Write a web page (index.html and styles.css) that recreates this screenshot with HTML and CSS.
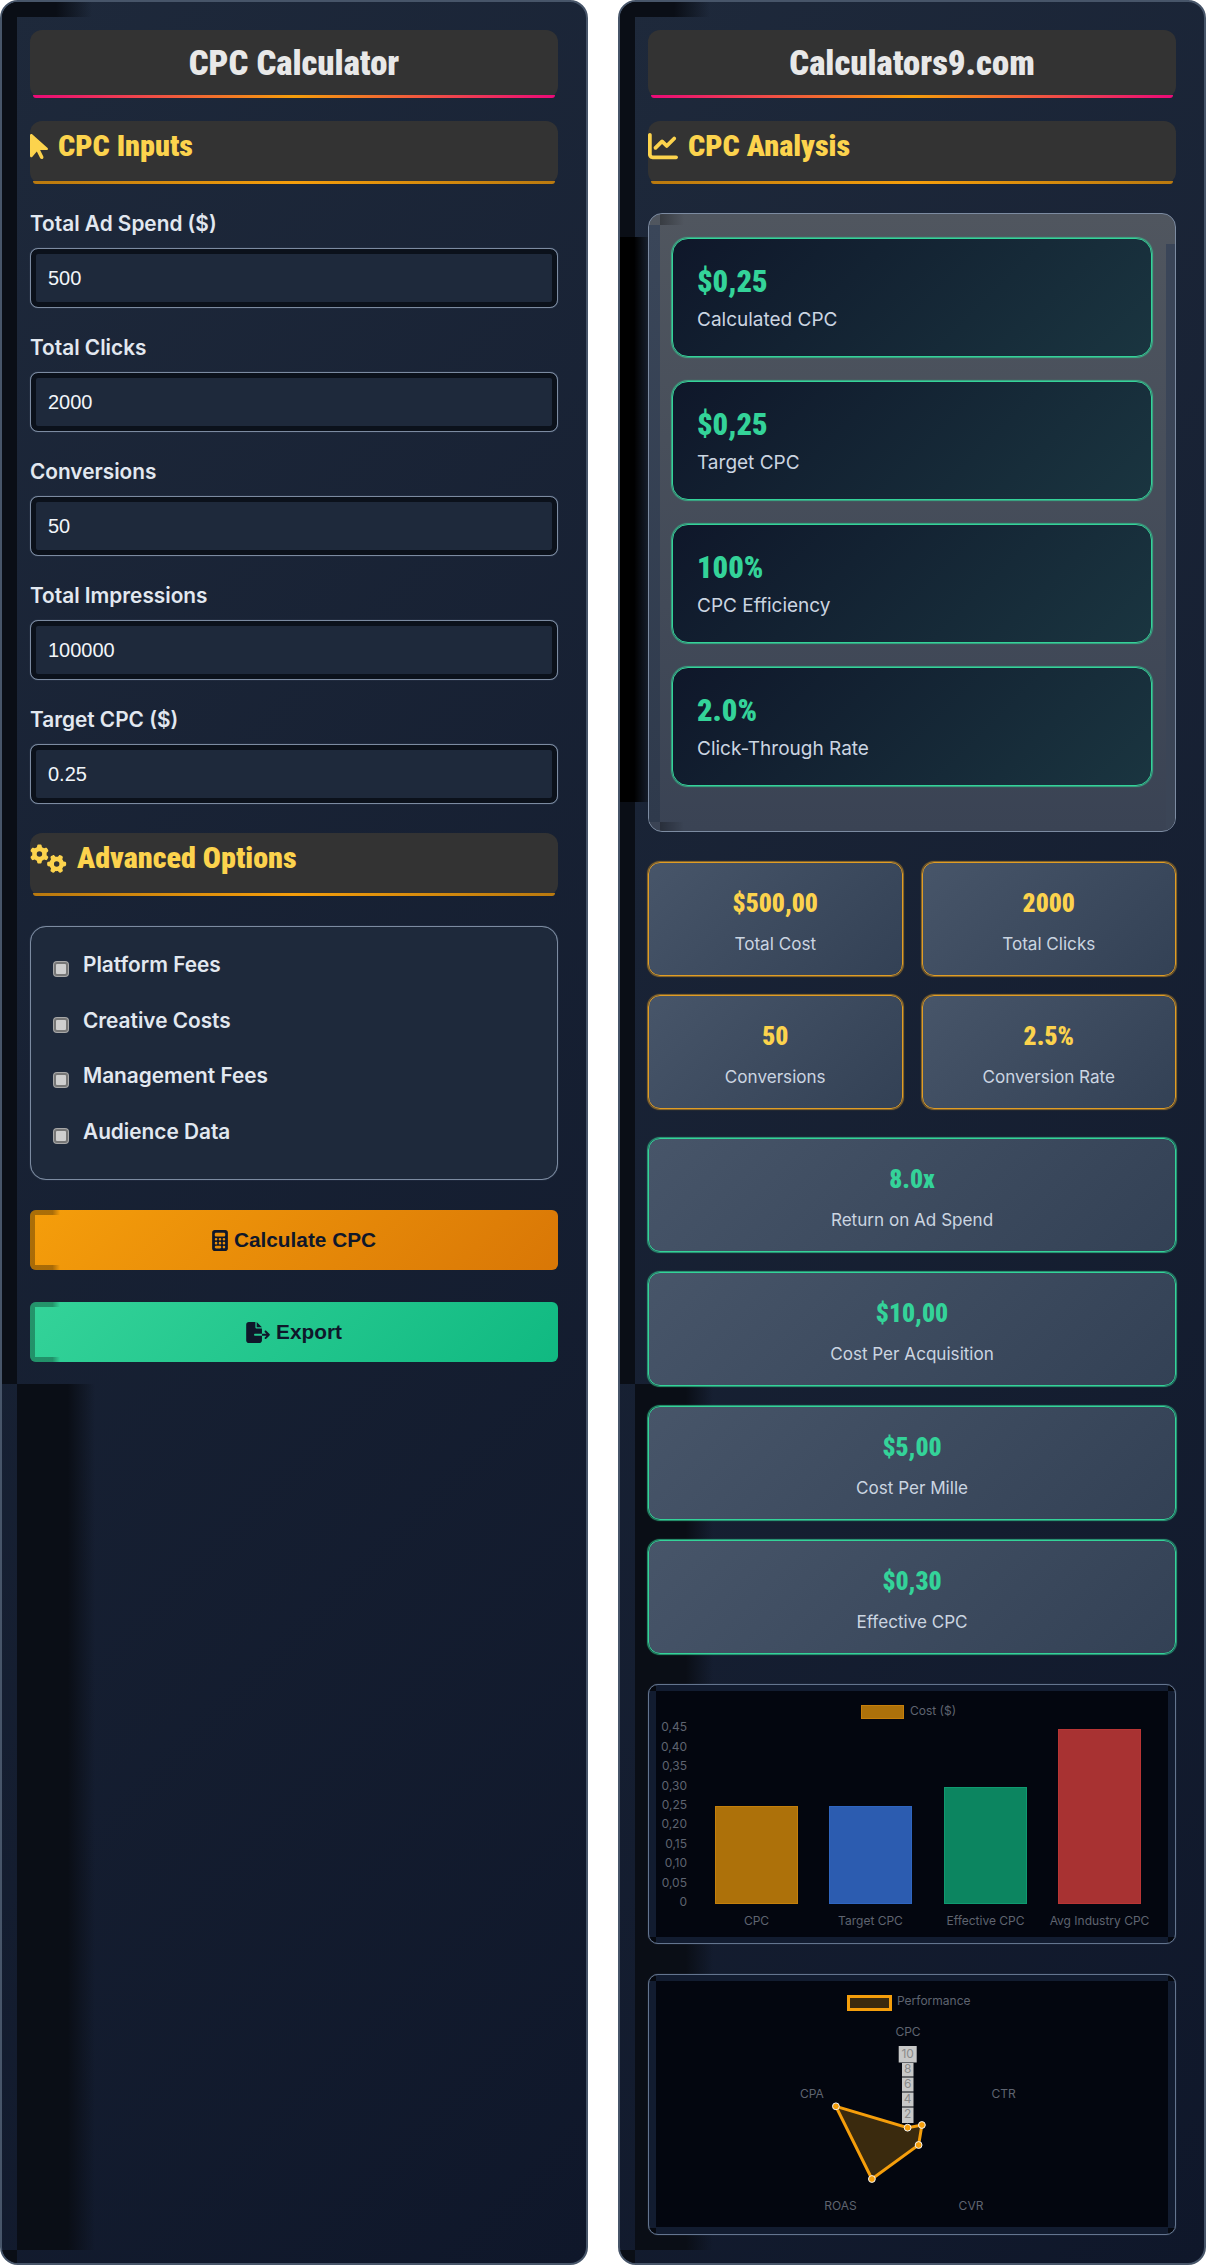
FILE: index.html
```html
<!DOCTYPE html>
<html lang="en">
<head>
    <meta charset="UTF-8">
    <meta name="viewport" content="width=device-width, initial-scale=1.0">
    <title>CPC Calculator</title>
    <link rel="stylesheet" href="styles.css">
</head>
<body>
    <div class="layout">
        <section class="panel panel-left">
            <h1 class="title">CPC Calculator</h1>
            <h2 class="section-head">
                <svg class="head-icon" viewBox="0 0 320 512" width="18" height="29"><path d="M0 55.2V426c0 12.2 9.9 22 22 22c6.3 0 12.4-2.7 16.6-7.5L121.2 346l58.1 116.3c7.9 15.8 27.1 22.2 42.9 14.3s22.2-27.1 14.3-42.9L179.8 320H297.9c12.2 0 22.1-9.9 22.1-22.1c0-6.3-2.7-12.3-7.4-16.5L38.6 37.9C34.3 34.1 28.9 32 23.2 32C10.4 32 0 42.4 0 55.2z"/></svg>
                CPC Inputs
            </h2>

            <div class="field">
                <label>Total Ad Spend ($)</label>
                <input type="text" value="500">
            </div>
            <div class="field">
                <label>Total Clicks</label>
                <input type="text" value="2000">
            </div>
            <div class="field">
                <label>Conversions</label>
                <input type="text" value="50">
            </div>
            <div class="field">
                <label>Total Impressions</label>
                <input type="text" value="100000">
            </div>
            <div class="field">
                <label>Target CPC ($)</label>
                <input type="text" value="0.25">
            </div>

            <h2 class="section-head">
                <svg class="head-icon" viewBox="0 0 640 512" width="37" height="29"><path d="M308.5 135.3c7.1-6.3 9.9-16.2 6.2-25c-2.3-5.3-4.8-10.5-7.6-15.5L304 89.4c-3-5-6.3-9.9-9.8-14.6c-5.7-7.6-15.7-10.1-24.7-7.1l-28.2 9.3c-10.7-8.8-23-16-36.2-20.9L199 27.1c-1.9-9.3-9.1-16.7-18.5-17.8C173.9 8.4 167.2 8 160.4 8h-.7c-6.8 0-13.5 .4-20.1 1.2c-9.4 1.1-16.6 8.6-18.5 17.8L115 56.1c-13.3 5-25.5 12.1-36.2 20.9L50.5 67.8c-9-3-19-.5-24.7 7.1c-3.5 4.7-6.8 9.6-9.9 14.6l-3 5.3c-2.8 5-5.3 10.2-7.6 15.6c-3.7 8.7-.9 18.6 6.2 25l22.2 19.8C32.6 161.9 32 168.9 32 176s.6 14.1 1.7 20.9L11.5 216.7c-7.1 6.3-9.9 16.2-6.2 25c2.3 5.3 4.8 10.5 7.6 15.6l3 5.2c3 5.1 6.3 9.9 9.9 14.6c5.7 7.6 15.7 10.1 24.7 7.1l28.2-9.3c10.7 8.8 23 16 36.2 20.9l6.1 29.1c1.9 9.3 9.1 16.7 18.5 17.8c6.7 .8 13.5 1.2 20.4 1.2s13.7-.4 20.4-1.2c9.4-1.1 16.6-8.6 18.5-17.8l6.1-29.1c13.3-5 25.5-12.1 36.2-20.9l28.2 9.3c9 3 19 .5 24.7-7.1c3.5-4.7 6.8-9.5 9.8-14.6l3.1-5.4c2.8-5 5.3-10.2 7.6-15.5c3.7-8.7 .9-18.6-6.2-25l-22.2-19.8c1.1-6.8 1.7-13.8 1.7-20.9s-.6-14.1-1.7-20.9l22.2-19.8zM112 176a48 48 0 1 1 96 0 48 48 0 1 1 -96 0zM504.7 500.5c6.3 7.1 16.2 9.9 25 6.2c5.3-2.3 10.5-4.8 15.5-7.6l5.4-3.1c5-3 9.9-6.3 14.6-9.8c7.6-5.7 10.1-15.7 7.1-24.7l-9.3-28.2c8.8-10.7 16-23 20.9-36.2l29.1-6.1c9.3-1.9 16.7-9.1 17.8-18.5c.8-6.7 1.2-13.5 1.2-20.4s-.4-13.7-1.2-20.4c-1.1-9.4-8.6-16.6-17.8-18.5L583.9 307c-5-13.3-12.1-25.5-20.9-36.2l9.3-28.2c3-9 .5-19-7.1-24.7c-4.7-3.5-9.6-6.8-14.6-9.9l-5.3-3c-5-2.8-10.2-5.3-15.6-7.6c-8.7-3.7-18.6-.9-25 6.2l-19.8 22.2c-6.8-1.1-13.8-1.7-20.9-1.7s-14.1 .6-20.9 1.7l-19.8-22.2c-6.3-7.1-16.2-9.9-25-6.2c-5.3 2.3-10.5 4.8-15.6 7.6l-5.2 3c-5.1 3-9.9 6.3-14.6 9.9c-7.6 5.7-10.1 15.7-7.1 24.7l9.3 28.2c-8.8 10.7-16 23-20.9 36.2L315.1 313c-9.3 1.9-16.7 9.1-17.8 18.5c-.8 6.7-1.2 13.5-1.2 20.4s.4 13.7 1.2 20.4c1.1 9.4 8.6 16.6 17.8 18.5l29.1 6.1c5 13.3 12.1 25.5 20.9 36.2l-9.3 28.2c-3 9-.5 19 7.1 24.7c4.7 3.5 9.5 6.8 14.6 9.8l5.4 3.1c5 2.8 10.2 5.3 15.5 7.6c8.7 3.7 18.6 .9 25-6.2l19.8-22.2c6.8 1.1 13.8 1.7 20.9 1.7s14.1-.6 20.9-1.7l19.8 22.2zM464 304a48 48 0 1 1 0 96 48 48 0 1 1 0-96z"/></svg>
                Advanced Options
            </h2>

            <div class="options">
                <div class="option"><span class="check"></span>Platform Fees</div>
                <div class="option"><span class="check"></span>Creative Costs</div>
                <div class="option"><span class="check"></span>Management Fees</div>
                <div class="option"><span class="check"></span>Audience Data</div>
            </div>

            <button class="btn btn-calc">
                <svg viewBox="0 0 384 512" width="16" height="21"><path d="M64 0C28.7 0 0 28.7 0 64V448c0 35.3 28.7 64 64 64H320c35.3 0 64-28.7 64-64V64c0-35.3-28.7-64-64-64H64zM96 64H288c17.7 0 32 14.3 32 32v32c0 17.7-14.3 32-32 32H96c-17.7 0-32-14.3-32-32V96c0-17.7 14.3-32 32-32zm32 160a32 32 0 1 1 -64 0 32 32 0 1 1 64 0zM96 352a32 32 0 1 1 0-64 32 32 0 1 1 0 64zM64 416c0-17.7 14.3-32 32-32h96c17.7 0 32 14.3 32 32s-14.3 32-32 32H96c-17.7 0-32-14.3-32-32zM192 256a32 32 0 1 1 0-64 32 32 0 1 1 0 64zm32 64a32 32 0 1 1 -64 0 32 32 0 1 1 64 0zm64-64a32 32 0 1 1 0-64 32 32 0 1 1 0 64zm32 64a32 32 0 1 1 -64 0 32 32 0 1 1 64 0zM288 448a32 32 0 1 1 0-64 32 32 0 1 1 0 64z"/></svg>
                Calculate CPC
            </button>
            <button class="btn btn-export">
                <svg viewBox="0 0 576 512" width="24" height="21"><path d="M0 64C0 28.7 28.7 0 64 0H224V128c0 17.7 14.3 32 32 32H384V288H216c-13.3 0-24 10.7-24 24s10.7 24 24 24H384V448c0 35.3-28.7 64-64 64H64c-35.3 0-64-28.7-64-64V64zM384 336V288H494.1l-39-39c-9.4-9.4-9.4-24.6 0-33.9s24.6-9.4 33.9 0l80 80c9.4 9.4 9.4 24.6 0 33.9l-80 80c-9.4 9.4-24.6 9.4-33.9 0s-9.4-24.6 0-33.9l39-39H384zm0-208H256V0L384 128z"/></svg>
                Export
            </button>
        </section>

        <section class="panel panel-right">
            <h1 class="title">Calculators9.com</h1>
            <h2 class="section-head">
                <svg class="head-icon" viewBox="0 0 512 512" width="30" height="30"><path d="M64 64c0-17.7-14.3-32-32-32S0 46.3 0 64V400c0 44.2 35.8 80 80 80H480c17.7 0 32-14.3 32-32s-14.3-32-32-32H80c-8.8 0-16-7.2-16-16V64zm406.6 86.6c12.5-12.5 12.5-32.8 0-45.3s-32.8-12.5-45.3 0L320 210.7l-57.4-57.4c-12.5-12.5-32.8-12.5-45.3 0l-112 112c-12.5 12.5-12.5 32.8 0 45.3s32.8 12.5 45.3 0L240 221.3l57.4 57.4c12.5 12.5 32.8 12.5 45.3 0l128-128z"/></svg>
                CPC Analysis
            </h2>

            <div class="glass">
                <div class="metric">
                    <div class="metric-value">$0,25</div>
                    <div class="metric-label">Calculated CPC</div>
                </div>
                <div class="metric">
                    <div class="metric-value">$0,25</div>
                    <div class="metric-label">Target CPC</div>
                </div>
                <div class="metric">
                    <div class="metric-value">100%</div>
                    <div class="metric-label">CPC Efficiency</div>
                </div>
                <div class="metric">
                    <div class="metric-value">2.0%</div>
                    <div class="metric-label">Click-Through Rate</div>
                </div>
            </div>

            <div class="stats">
                <div class="stat">
                    <div class="stat-value">$500,00</div>
                    <div class="stat-label">Total Cost</div>
                </div>
                <div class="stat">
                    <div class="stat-value">2000</div>
                    <div class="stat-label">Total Clicks</div>
                </div>
                <div class="stat">
                    <div class="stat-value">50</div>
                    <div class="stat-label">Conversions</div>
                </div>
                <div class="stat">
                    <div class="stat-value">2.5%</div>
                    <div class="stat-label">Conversion Rate</div>
                </div>
            </div>

            <div class="wide-list">
                <div class="stat stat-green">
                    <div class="stat-value">8.0x</div>
                    <div class="stat-label">Return on Ad Spend</div>
                </div>
                <div class="stat stat-green">
                    <div class="stat-value">$10,00</div>
                    <div class="stat-label">Cost Per Acquisition</div>
                </div>
                <div class="stat stat-green">
                    <div class="stat-value">$5,00</div>
                    <div class="stat-label">Cost Per Mille</div>
                </div>
                <div class="stat stat-green">
                    <div class="stat-value">$0,30</div>
                    <div class="stat-label">Effective CPC</div>
                </div>
            </div>

            <div class="chart-box">
                <svg class="chart" viewBox="0 0 512 246" width="512" height="246">
                    <rect x="205.5" y="14.5" width="42" height="13" fill="#ad710a" stroke="#c77f0a"/>
                    <text x="254" y="21">Cost ($)</text>

                    <g text-anchor="end">
                        <text x="31" y="37">0,45</text>
                        <text x="31" y="56.4">0,40</text>
                        <text x="31" y="75.9">0,35</text>
                        <text x="31" y="95.3">0,30</text>
                        <text x="31" y="114.8">0,25</text>
                        <text x="31" y="134.2">0,20</text>
                        <text x="31" y="153.7">0,15</text>
                        <text x="31" y="173.1">0,10</text>
                        <text x="31" y="192.6">0,05</text>
                        <text x="31" y="212">0</text>
                    </g>

                    <rect x="59.5" y="115.5" width="82" height="97" fill="#ad710a" stroke="#c47f0b"/>
                    <rect x="173.5" y="115.5" width="82" height="97" fill="#2c5cb0" stroke="#2f65c0"/>
                    <rect x="288.5" y="96.5" width="82" height="116" fill="#0c8560" stroke="#0f9a70"/>
                    <rect x="402.5" y="38.5" width="82" height="174" fill="#a83232" stroke="#b93535"/>

                    <g text-anchor="middle">
                        <text x="100.5" y="231">CPC</text>
                        <text x="214.5" y="231">Target CPC</text>
                        <text x="329.5" y="231">Effective CPC</text>
                        <text x="443.5" y="231">Avg Industry CPC</text>
                    </g>
                </svg>
            </div>

            <div class="chart-box chart-box-radar">
                <svg class="chart" viewBox="0 0 512 246" width="512" height="246">
                    <rect x="192.5" y="15.5" width="42" height="13" fill="#3a2a0e" stroke="#f59e0b" stroke-width="3"/>
                    <text x="241" y="21">Performance</text>

                    <g text-anchor="middle">
                        <text x="252" y="52">CPC</text>
                        <text x="347.5" y="114">CTR</text>
                        <text x="315" y="226">CVR</text>
                        <text x="184.5" y="226">ROAS</text>
                        <text x="156" y="114">CPA</text>
                    </g>

                    <rect x="242.7" y="65" width="18" height="16.5" fill="#c8c8c8"/>
                    <rect x="246" y="82" width="11.5" height="13.5" fill="#c8c8c8"/>
                    <rect x="246" y="96.5" width="11.5" height="14" fill="#c8c8c8"/>
                    <rect x="246" y="111.5" width="11.5" height="14" fill="#c8c8c8"/>
                    <rect x="246" y="126.5" width="11.5" height="15.5" fill="#c8c8c8"/>
                    <g text-anchor="middle" class="ticks">
                        <text x="251.7" y="73.5">10</text>
                        <text x="251.7" y="88.5">8</text>
                        <text x="251.7" y="104">6</text>
                        <text x="251.7" y="119">4</text>
                        <text x="251.7" y="134">2</text>
                    </g>

                    <polygon points="251.6,146.7 265.9,144 262.6,164 215.9,198 179.9,125.3" fill="#3a2a0e" stroke="#f59e0b" stroke-width="3"/>
                    <g fill="#f59e0b" stroke="#f3f4f6" stroke-width="1">
                        <circle cx="251.6" cy="146.7" r="3.4"/>
                        <circle cx="265.9" cy="144" r="3.4"/>
                        <circle cx="262.6" cy="164" r="3.4"/>
                        <circle cx="215.9" cy="198" r="3.4"/>
                        <circle cx="179.9" cy="125.3" r="3.4"/>
                    </g>
                </svg>
            </div>
        </section>
    </div>
</body>
</html>
```

FILE: styles.css
```css
* {
    box-sizing: border-box;
}

body {
    margin: 0;
    background: #fff;
    font-family: Inter, "Noto Sans", sans-serif;
    color: #e2e8f0;
}

.layout {
    display: grid;
    grid-template-columns: 588px 588px;
    gap: 30px;
    min-height: 2265px;
}

.panel {
    position: relative;
    overflow: hidden;
    background: linear-gradient(135deg, #1e293b, #0f172a);
    border: 2px solid #475569;
    border-radius: 18px;
    padding: 28px;
}

/* the dark bands along the panel's left edge and top */
.panel::before {
    content: "";
    position: absolute;
    inset: 0;
    pointer-events: none;
    background:
        linear-gradient(#0a0e16, #0a0e16) 0 0 / 15px 1382px no-repeat,
        linear-gradient(90deg, #0a0e16, #0a0e16 60%, transparent) 0 0 / 90px 15px no-repeat,
        linear-gradient(90deg, #0a0e16, #0a0e16 65%, transparent) 15px 1382px / 78px 866px no-repeat,
        linear-gradient(#0a0e16, #0a0e16) 0 2248px / 15px 17px no-repeat;
}

.panel-right::before {
    background:
        linear-gradient(90deg, #000, #000 44%, transparent) 0 235px / 32px 565px no-repeat,
        linear-gradient(#0a0e16, #0a0e16) 0 0 / 15px 1382px no-repeat,
        linear-gradient(90deg, #0a0e16, #0a0e16 60%, transparent) 0 0 / 90px 15px no-repeat,
        linear-gradient(90deg, #0a0e16, #0a0e16 65%, transparent) 15px 1382px / 78px 866px no-repeat,
        linear-gradient(#0a0e16, #0a0e16) 0 2248px / 15px 17px no-repeat;
}

.panel > * {
    position: relative;
}

.title,
.section-head,
.metric-value,
.stat-value {
    font-family: "Roboto Condensed", Roboto, sans-serif;
    font-stretch: condensed;
    font-weight: 900;
}

.title {
    margin: 0 0 23px;
    height: 68px;
    background: #333;
    border-radius: 12px;
    color: #e8e8e8;
    font-size: 34.7px;
    line-height: 66px;
    text-align: center;
}

.title::after,
.section-head::after {
    content: "";
    position: absolute;
    left: 3px;
    right: 3px;
    bottom: 0;
    height: 3px;
    border-radius: 0 0 10px 10px;
    background: linear-gradient(90deg, #ec0a78, #f59e0b, #ec0a78);
}

.section-head {
    display: flex;
    align-items: center;
    gap: 10px;
    margin: 0 0 29px;
    height: 63px;
    padding-bottom: 13px;
    background: #333;
    border-radius: 12px;
    color: #fcd34d;
    font-size: 30.1px;
    line-height: 1;
}

.section-head::after {
    background: linear-gradient(90deg, #b9790f, #f59e0b, #b9790f);
}

.head-icon {
    fill: #fcd34d;
    flex: none;
}

.field {
    margin-bottom: 29px;
}

.field label {
    display: block;
    margin-bottom: 14px;
    font-size: 20.8px;
    font-weight: 600;
    line-height: 21px;
}

.field input {
    display: block;
    width: 100%;
    height: 60px;
    padding: 0 17px;
    background: #1e293b;
    border: 1px solid #7c8ba1;
    border-radius: 8px;
    box-shadow: 0 0 1px #64748b, inset 0 0 0 5px #0b111b;
    color: #f1f5f9;
    font-family: "Liberation Sans", Arial, sans-serif;
    font-size: 20px;
}

.options {
    display: flex;
    flex-direction: column;
    gap: 31.6px;
    height: 254px;
    margin: 30px 0;
    padding: 26px 23px;
    background: #1e293b;
    border: 1px solid #7c8ba1;
    box-shadow: 0 0 1px #64748b;
    border-radius: 16px;
}

.option {
    display: flex;
    align-items: flex-start;
    gap: 15px;
    font-size: 20.8px;
    font-weight: 600;
    line-height: 24px;
}

.check {
    flex: none;
    width: 14px;
    height: 14px;
    margin-top: 9px;
    background: #cfcfcf;
    border: 2px solid #777;
    border-radius: 3px;
    box-shadow: 0 0 0 1px #a8a8a8;
}

.btn {
    display: flex;
    align-items: center;
    justify-content: center;
    gap: 6px;
    position: relative;
    width: 100%;
    height: 60px;
    margin-bottom: 32px;
    border: none;
    border-radius: 6px;
    color: #0f172a;
    font-family: "Liberation Sans", Arial, sans-serif;
    font-size: 20.8px;
    font-weight: 700;
    overflow: hidden;
}

.btn svg {
    fill: #0f172a;
}

.btn::before {
    content: "";
    position: absolute;
    inset: 0;
    background:
        linear-gradient(rgba(0, 0, 0, .3), rgba(0, 0, 0, .3)) 0 0 / 5px 100% no-repeat,
        linear-gradient(90deg, rgba(0, 0, 0, .3) 70%, transparent) 5px 0 / 25px 5px no-repeat,
        linear-gradient(90deg, rgba(0, 0, 0, .3) 70%, transparent) 5px 100% / 25px 5px no-repeat;
}

.btn-calc {
    background: linear-gradient(135deg, #f59e0b, #d97706);
}

.btn-export {
    background: linear-gradient(135deg, #34d399, #10b981);
}

.glass {
    position: relative;
    display: flex;
    flex-direction: column;
    gap: 24px;
    height: 619px;
    padding: 24px 23px;
    background: linear-gradient(180deg, #50565f, #3a4354);
    border: 1px solid #7c8ba1;
    border-radius: 14px;
    overflow: hidden;
}

/* the darker side bands and the fades at their corners */
.glass::before {
    content: "";
    position: absolute;
    inset: 0;
    background:
        linear-gradient(90deg, rgba(0, 0, 0, .3), transparent) 11px 0 / 24px 11px no-repeat,
        linear-gradient(90deg, rgba(0, 0, 0, .3), transparent) 11px 100% / 24px 9px no-repeat,
        linear-gradient(#3a4659, #2f3a4c) 0 11px / 11px calc(100% - 20px) no-repeat,
        linear-gradient(#3a4558, #3b4556) 100% 30px / 9px calc(100% - 30px) no-repeat;
}

.metric {
    position: relative;
    height: 119px;
    padding: 26px 24px;
    background: linear-gradient(135deg, #0f172a, #1a3540);
    border: 1px solid #34d399;
    box-shadow: 0 0 1px 1px rgba(52, 211, 153, .7);
    border-radius: 16px;
}

.metric-value {
    color: #34d399;
    font-size: 30.5px;
    line-height: 34px;
}

.metric-label {
    margin-top: 10px;
    color: #cbd5e1;
    font-size: 19px;
    line-height: 21px;
}

.stats {
    display: grid;
    grid-template-columns: 1fr 1fr;
    gap: 19px;
    margin-top: 30px;
}

.wide-list {
    display: flex;
    flex-direction: column;
    gap: 20px;
    margin-top: 29px;
}

.stat {
    height: 114px;
    padding: 25px 16px 20px;
    background: linear-gradient(135deg, #475569, #334155);
    border: 1px solid #e09d25;
    box-shadow: 0 0 1px 1px rgba(224, 157, 37, .6);
    border-radius: 12px;
    text-align: center;
}

.stat-value {
    color: #fcd34d;
    font-size: 25.6px;
    line-height: 30px;
}

.stat-label {
    margin-top: 16px;
    color: #cbd5e1;
    font-size: 17.1px;
    line-height: 20px;
}

.stat-green {
    border-color: #34d399;
    box-shadow: 0 0 1px 1px rgba(52, 211, 153, .7);
}

.stat-green .stat-value {
    color: #34d399;
}

.chart-box {
    height: 260px;
    margin-top: 30px;
    padding: 6px 7px;
    background:
        linear-gradient(#05080f, #05080f) 0 0 / 7px 6px no-repeat,
        linear-gradient(#05080f, #05080f) 100% 0 / 7px 6px no-repeat,
        linear-gradient(#05080f, #05080f) 0 100% / 7px 6px no-repeat,
        linear-gradient(#05080f, #05080f) 100% 100% / 7px 6px no-repeat,
        #121c30;
    border: 1px solid #64758f;
    box-shadow: 0 0 1px #566780;
    border-radius: 10px;
}

.chart-box-radar {
    height: 261px;
}

.chart {
    display: block;
    background: #03060f;
    font-family: Inter, sans-serif;
    font-size: 12px;
}

.chart text {
    fill: #5f6470;
    dominant-baseline: middle;
}

.chart .ticks text {
    fill: #8a8a8a;
}
```
